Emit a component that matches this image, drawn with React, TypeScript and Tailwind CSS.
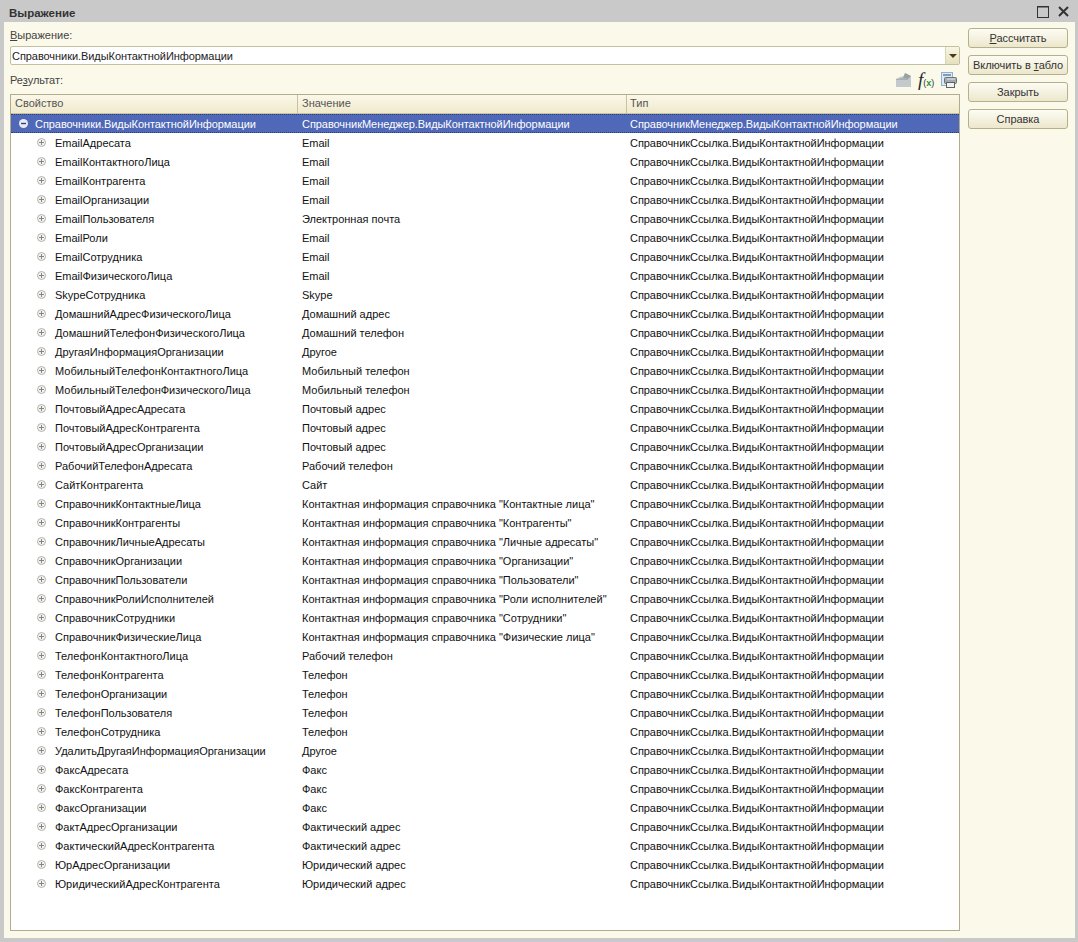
const rows: [string, string][] = [
  ["EmailАдресата", "Email"],
  ["EmailКонтактногоЛица", "Email"],
  ["EmailКонтрагента", "Email"],
  ["EmailОрганизации", "Email"],
  ["EmailПользователя", "Электронная почта"],
  ["EmailРоли", "Email"],
  ["EmailСотрудника", "Email"],
  ["EmailФизическогоЛица", "Email"],
  ["SkypeСотрудника", "Skype"],
  ["ДомашнийАдресФизическогоЛица", "Домашний адрес"],
  ["ДомашнийТелефонФизическогоЛица", "Домашний телефон"],
  ["ДругаяИнформацияОрганизации", "Другое"],
  ["МобильныйТелефонКонтактногоЛица", "Мобильный телефон"],
  ["МобильныйТелефонФизическогоЛица", "Мобильный телефон"],
  ["ПочтовыйАдресАдресата", "Почтовый адрес"],
  ["ПочтовыйАдресКонтрагента", "Почтовый адрес"],
  ["ПочтовыйАдресОрганизации", "Почтовый адрес"],
  ["РабочийТелефонАдресата", "Рабочий телефон"],
  ["СайтКонтрагента", "Сайт"],
  ["СправочникКонтактныеЛица", 'Контактная информация справочника "Контактные лица"'],
  ["СправочникКонтрагенты", 'Контактная информация справочника "Контрагенты"'],
  ["СправочникЛичныеАдресаты", 'Контактная информация справочника "Личные адресаты"'],
  ["СправочникОрганизации", 'Контактная информация справочника "Организации"'],
  ["СправочникПользователи", 'Контактная информация справочника "Пользователи"'],
  ["СправочникРолиИсполнителей", 'Контактная информация справочника "Роли исполнителей"'],
  ["СправочникСотрудники", 'Контактная информация справочника "Сотрудники"'],
  ["СправочникФизическиеЛица", 'Контактная информация справочника "Физические лица"'],
  ["ТелефонКонтактногоЛица", "Рабочий телефон"],
  ["ТелефонКонтрагента", "Телефон"],
  ["ТелефонОрганизации", "Телефон"],
  ["ТелефонПользователя", "Телефон"],
  ["ТелефонСотрудника", "Телефон"],
  ["УдалитьДругаяИнформацияОрганизации", "Другое"],
  ["ФаксАдресата", "Факс"],
  ["ФаксКонтрагента", "Факс"],
  ["ФаксОрганизации", "Факс"],
  ["ФактАдресОрганизации", "Фактический адрес"],
  ["ФактическийАдресКонтрагента", "Фактический адрес"],
  ["ЮрАдресОрганизации", "Юридический адрес"],
  ["ЮридическийАдресКонтрагента", "Юридический адрес"],
];

function Plus() {
  return (
    <svg width="9" height="9" viewBox="0 0 9 9" className="shrink-0">
      <circle cx="4.5" cy="4.5" r="4" fill="#f4f4f0" stroke="#b0b0ac" />
      <path d="M2 4.5h5M4.5 2v5" stroke="#85857f" />
    </svg>
  );
}

function Minus() {
  return (
    <svg width="9" height="9" viewBox="0 0 9 9" className="shrink-0">
      <circle cx="4.5" cy="4.5" r="4.5" fill="#e8eaf4" />
      <path d="M2 4.5h5" stroke="#34407c" strokeWidth="1.4" />
    </svg>
  );
}

function Btn({ children }: { children: React.ReactNode }) {
  return (
    <div className="h-[20px] w-[100px] flex items-center justify-center rounded-[3px] border border-[#b5b08c] bg-gradient-to-b from-[#fdfcf4] to-[#ece7cc] text-[#333] whitespace-nowrap tracking-[-0.05px]">
      {children}
    </div>
  );
}

export default function App() {
  return (
    <div className="w-[1078px] h-[942px] overflow-hidden flex flex-col bg-[#c9c9c9] text-[11px] leading-[14px] text-[#111] font-['Liberation_Sans',sans-serif]">
      <div className="h-[22px] pl-[9px] pr-[9px] pt-[3px] flex items-center justify-between shrink-0">
        <span className="font-bold text-[11.5px] text-[#333]">Выражение</span>
        <div className="flex items-center gap-[9px] pb-[2px]">
          <svg width="12" height="12" viewBox="0 0 12 12">
            <rect x="0.5" y="0.5" width="11" height="11" fill="none" stroke="#333" />
            <path d="M0 1h12" stroke="#333" />
          </svg>
          <svg width="11" height="11" viewBox="0 0 11 11">
            <path d="M1 1l9 9M10 1l-9 9" stroke="#333" strokeWidth="2" />
          </svg>
        </div>
      </div>
      <div className="flex-1 ml-[4px] mr-[3px] mb-[4px] bg-[#fbf9ea] flex min-h-0 pl-[6px] pr-[10px]">
        <div className="w-[950px] flex flex-col shrink-0 pb-[7px]">
          <div className="h-[24px] pt-[6px] text-[#444]">
            <span className="underline">В</span>ыражение:
          </div>
          <div className="h-[19px] shrink-0 flex items-center rounded-[2px] border border-[#c4bf9c] bg-white pl-[1px] text-[#222]">
            <span className="flex-1 tracking-[-0.06px]">Справочники.ВидыКонтактнойИнформации</span>
            <div className="w-[14px] h-[17px] flex items-center justify-center bg-gradient-to-b from-[#f8f6e4] to-[#e6e0bc] border-l border-[#d8d4b4]">
              <div className="w-0 h-0 border-x-[4px] border-x-transparent border-t-[4px] border-t-[#4a3c10]" />
            </div>
          </div>
          <div className="h-[29px] flex items-center justify-between shrink-0 pt-[1px]">
            <span className="text-[#444]">
              Ре<span className="underline">з</span>ультат:
            </span>
            <div className="flex items-center gap-[6px] pr-[3px]">
              <svg width="17" height="16" viewBox="0 0 17 16">
                <path d="M1 7l4-2 4-1 1-3 6 3v11H1z" fill="#c4cacb" />
                <path d="M10 1l6 3-3 3-5-1z" fill="#98a2a5" />
                <path d="M1 7l7-1 5 1v1H1z" fill="#a8b0b2" />
              </svg>
              <span className="flex items-baseline w-[17px] font-['Liberation_Serif',serif] italic text-[19px] leading-[16px] text-[#1f2c2c]">
                f
                <span className="not-italic text-[9px] leading-[8px] text-[#333] font-['Liberation_Sans',sans-serif]">
                  (<span className="text-[#2f8f3a] font-bold">x</span>)
                </span>
              </span>
              <svg width="16" height="16" viewBox="0 0 16 16">
                <rect x="0.5" y="0.5" width="11" height="13" fill="#dfeaf6" stroke="#8fb0d0" />
                <path d="M2 3h8" stroke="#7f9cc0" strokeWidth="2" />
                <rect x="3.5" y="5.5" width="12" height="6" rx="1" fill="#a4abae" stroke="#6c7478" />
                <rect x="5.5" y="10.5" width="8" height="5" fill="#f2f2f2" stroke="#5c6468" />
                <path d="M6 7h8" stroke="#e4e8ea" />
              </svg>
            </div>
          </div>
          <div className="flex-1 min-h-0 flex flex-col border border-[#b1ac8c] bg-white overflow-hidden">
            <div className="h-[19px] shrink-0 grid grid-cols-[287px_329px_1fr] bg-gradient-to-b from-[#fbf8e8] to-[#efe9cc] border-b border-[#c8c2a0] text-[#555] pb-[2px]">
              <div className="pl-[4px] flex items-center border-r border-[#c8c2a0] -mb-[2px] pb-[2px]">Свойство</div>
              <div className="pl-[4px] flex items-center border-r border-[#c8c2a0] -mb-[2px] pb-[2px]">Значение</div>
              <div className="pl-[3px] flex items-center">Тип</div>
            </div>
            <div className="h-[19px] shrink-0 grid grid-cols-[287px_329px_1fr] bg-[#4f68b8] text-white border-y border-dotted border-[#2c3c78] tracking-[-0.06px]">
              <div className="flex items-center pl-[8px] gap-[7px]">
                <Minus />
                <span>Справочники.ВидыКонтактнойИнформации</span>
              </div>
              <div className="pl-[4px] flex items-center">СправочникМенеджер.ВидыКонтактнойИнформации</div>
              <div className="pl-[3px] flex items-center">СправочникМенеджер.ВидыКонтактнойИнформации</div>
            </div>
            {rows.map(([name, value]) => (
              <div key={name} className="h-[19px] shrink-0 grid grid-cols-[287px_329px_1fr] items-center">
                <div className="flex items-center pl-[26px] gap-[9px]">
                  <Plus />
                  <span>{name}</span>
                </div>
                <div className="pl-[4px]">{value}</div>
                <div className="pl-[3px] tracking-[-0.05px]">СправочникСсылка.ВидыКонтактнойИнформации</div>
              </div>
            ))}
          </div>
        </div>
        <div className="ml-[8px] pt-[6px] flex flex-col gap-[7px]">
          <Btn>
            <span>
              <span className="underline">Р</span>ассчитать
            </span>
          </Btn>
          <Btn>
            <span>
              Включить в <span className="underline">т</span>абло
            </span>
          </Btn>
          <Btn>Закрыть</Btn>
          <Btn>Справка</Btn>
        </div>
      </div>
    </div>
  );
}
